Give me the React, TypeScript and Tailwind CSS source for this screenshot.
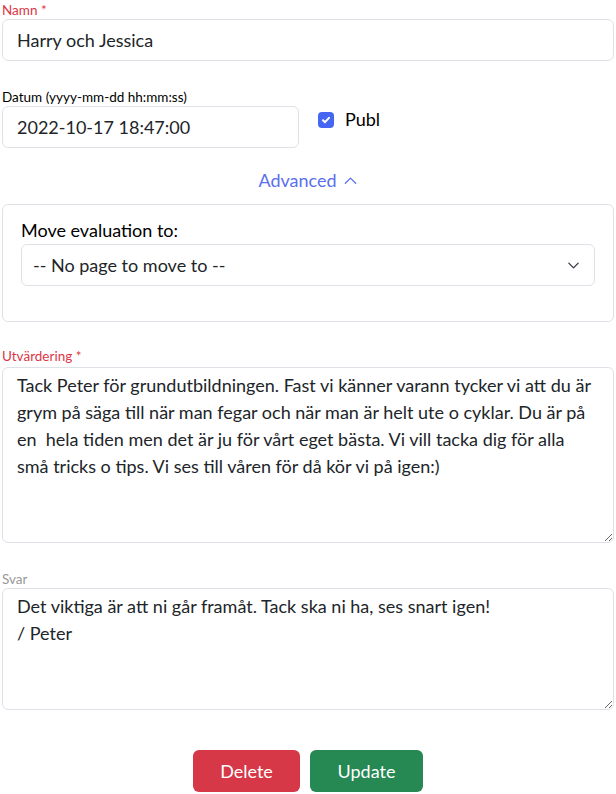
const FONT = '"Lato", "Noto Sans", sans-serif';

const Chevron = ({ up }: { up?: boolean }) => (
  <svg width="15" height="15" viewBox="0 0 16 16" fill="none" stroke="currentColor" strokeWidth="1.4" strokeLinecap="round" strokeLinejoin="round">
    {up ? <path d="M2.5 11l5.5-5.5 5.5 5.5" /> : <path d="M3 5.5l5 5 5-5" />}
  </svg>
);

export default function App() {
  return (
    <div className="bg-white min-h-screen px-[2px] text-[18px] text-[#212529]" style={{ fontFamily: FONT }}>
      <label className="block text-[13.5px] text-[#dc3545] pt-[1px] leading-[18px]">Namn *</label>
      <input
        className="block w-full h-[42px] border border-[#dee2e6] rounded-[6px] px-[14px] outline-none"
        defaultValue="Harry och Jessica"
      />

      <label className="block text-[13.5px] text-black mt-[27px] leading-[18px]">Datum (yyyy-mm-dd hh:mm:ss)</label>
      <div className="flex items-start">
        <input
          className="block w-[297px] h-[42px] border border-[#dee2e6] rounded-[6px] px-[14px] outline-none"
          defaultValue="2022-10-17 18:47:00"
        />
        <div className="flex items-center ml-[19px] gap-[11px]">
          <span className="w-[16px] h-[16px] rounded-[4px] bg-[#4466f2] flex items-center justify-center">
            <svg width="10" height="10" viewBox="0 0 10 10" fill="none" stroke="white" strokeWidth="2" strokeLinecap="round" strokeLinejoin="round">
              <path d="M2 5.2l2 2 4-4.4" />
            </svg>
          </span>
          <span className="text-black">Publ</span>
        </div>
      </div>

      <div className="flex justify-center items-center gap-[6px] text-[#5a6ff0] mt-[19px] h-[27px]">
        <span>Advanced</span>
        <Chevron up />
      </div>

      <div className="mt-[10px] border border-[#dee2e6] rounded-[6px] pt-[12px] px-[18px] h-[118px]">
        <div className="text-black leading-[27px]">Move evaluation to:</div>
        <div className="relative">
          <select className="block w-full h-[42px] border border-[#dee2e6] rounded-[6px] pl-[11px] appearance-none bg-white outline-none">
            <option>-- No page to move to --</option>
          </select>
          <span className="absolute right-[14px] top-[14px] text-[#343a40] pointer-events-none">
            <Chevron />
          </span>
        </div>
      </div>

      <label className="block text-[13.5px] text-[#dc3545] mt-[25px] mb-[2px] leading-[18px]">Utvärdering *</label>
      <textarea
        className="block w-full h-[176px] border border-[#dee2e6] rounded-[6px] pl-[14px] pr-[18px] py-[4px] leading-[27px] outline-none"
        defaultValue="Tack Peter för grundutbildningen. Fast vi känner varann tycker vi att du är grym på säga till när man fegar och när man är helt ute o cyklar. Du är på en  hela tiden men det är ju för vårt eget bästa. Vi vill tacka dig för alla små tricks o tips. Vi ses till våren för då kör vi på igen:)"
      />

      <label className="block text-[13.5px] text-[#999] mt-[27px] leading-[18px]">Svar</label>
      <textarea
        className="block w-full h-[122px] border border-[#dee2e6] rounded-[6px] pl-[14px] pr-[18px] py-[4px] leading-[27px] outline-none"
        defaultValue={"Det viktiga är att ni går framåt. Tack ska ni ha, ses snart igen!\n/ Peter"}
      />

      <div className="flex justify-center gap-[10px] mt-[40px]">
        <button className="w-[107px] h-[42px] rounded-[6px] bg-[#d63848] text-white">Delete</button>
        <button className="w-[113px] h-[42px] rounded-[6px] bg-[#268853] text-white">Update</button>
      </div>
    </div>
  );
}
